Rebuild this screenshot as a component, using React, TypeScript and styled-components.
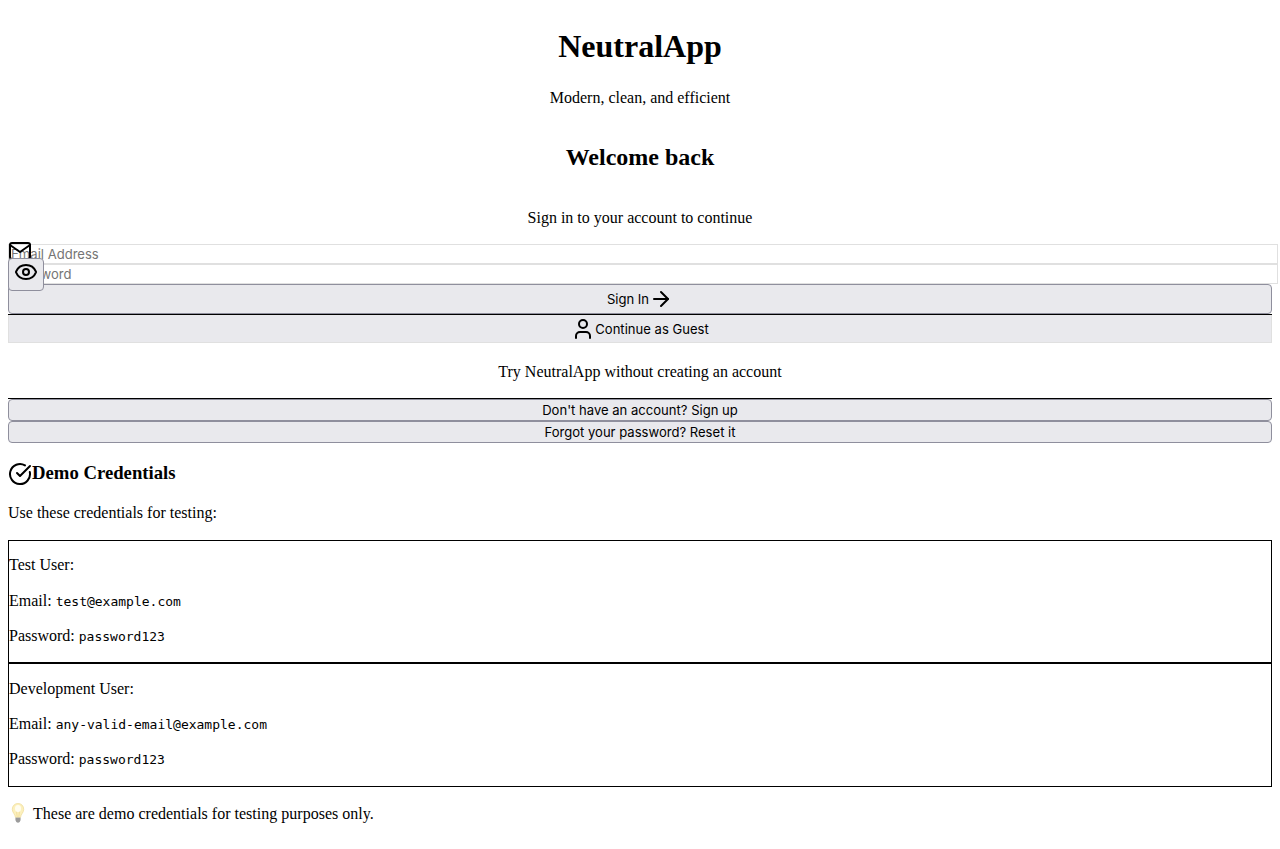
import React from "react";
import styled, { createGlobalStyle } from "styled-components";
import { ArrowRight, CircleCheckBig, Eye, User } from "lucide-react";

const GlobalStyle = createGlobalStyle`
  body {
    margin: 0;
    background: #fff;
    color: #000;
    font: 16px/18px "Liberation Serif", "Times New Roman", serif;
    overflow: hidden;
  }
  svg { flex: none; display: block; }
`;

const Page = styled.main`
  padding: 28px 8px 0;
  display: flex;
  flex-direction: column;
`;

const Header = styled.header`
  text-align: center;
`;

const Title = styled.h1`
  margin: 0 0 24px;
  font-size: 32px;
  line-height: 37px;
`;

const Subtitle = styled.h2`
  margin: 37px 0 38px;
  font-size: 24px;
  line-height: 27px;
`;

const Text = styled.p<{ $height?: number; $gap?: number }>`
  margin: 0 0 ${(p) => p.$gap ?? 0}px;
  line-height: ${(p) => p.$height ?? 18}px;
`;

const Form = styled.form`
  margin-top: 17px;
  display: flex;
  flex-direction: column;
`;

const Field = styled.div`
  position: relative;
  height: 20px;
`;

const Input = styled.input`
  display: block;
  box-sizing: border-box;
  width: calc(100% + 6px);
  height: 20px;
  margin: 0;
  padding: 1px 2px;
  border: 1px solid #e0e0e0;
  background: #fff;
  font: 13.07px Inter, sans-serif;
  &::placeholder { color: #757575; opacity: 1; }
`;

const FieldIcon = styled.span`
  position: absolute;
  left: 0;
  top: -5px;
`;

const Button = styled.button<{ $height: number }>`
  display: flex;
  align-items: center;
  justify-content: center;
  box-sizing: border-box;
  width: 100%;
  height: ${(p) => p.$height}px;
  margin: 0;
  padding: 0;
  border: 1px solid #8f8f9d;
  border-radius: 4px;
  background: #e9e9ed;
  color: #000;
  font: 13.07px Inter, sans-serif;
`;

const RevealButton = styled(Button)`
  position: absolute;
  left: 0;
  top: -6px;
  width: 36px;
  padding-bottom: 5px;
`;

const GuestButton = styled(Button)`
  border: 1px solid #e0e0e0;
  border-top: 0;
  border-radius: 0;
`;

const GuestHint = styled.p`
  margin: 0;
  padding-top: 2px;
  line-height: 53px;
`;

const Divided = styled.section`
  border-top: 1px solid #000;
  text-align: center;
`;

const DemoHeading = styled.h3`
  display: flex;
  align-items: center;
  margin: 19px 0 18px;
  font-size: 18.72px;
  line-height: 22px;
  height: 24px;
`;

const HeadingLabel = styled.span`
  padding-bottom: 2px;
`;

const Card = styled.div<{ $height: number }>`
  box-sizing: border-box;
  height: ${(p) => p.$height}px;
  border: 1px solid #000;
  padding-top: ${(p) => p.$height - 108}px;
`;

const Code = styled.code`
  font: 13px "DejaVu Sans Mono", monospace;
`;

const Note = styled.div`
  display: flex;
  align-items: center;
  gap: 5px;
  height: 20px;
  margin-top: 16px;
`;

const NoteLabel = styled.span`
  padding-top: 1px;
  letter-spacing: 0.01px;
`;

function Mail() {
  return (
    <svg width="24" height="24" viewBox="0 0 24 24" fill="none" stroke="currentColor" strokeWidth="2" strokeLinecap="round" strokeLinejoin="round">
      <path d="M4 4h16c1.1 0 2 .9 2 2v12c0 1.1-.9 2-2 2H4c-1.100 0-2-.9-2-2V6c0-1.100.9-2 2-2z" />
      <polyline points="22,6 12,13 2,6" />
    </svg>
  );
}

function Bulb() {
  return (
    <svg width="20" height="20" viewBox="0 0 20 20" fill="none">
      <path d="M10 .5C6.300 .5 4.300 3.200 4.300 6.300C4.300 9.700 7.100 11 7.500 14.500H12.500C12.900 11 15.700 9.700 15.700 6.300C15.700 3.200 13.700 .5 10 .5Z" fill="#fcf0bd" stroke="#f0dea0" strokeWidth=".8" />
      <path d="M8.500 8L9.200 14M11.500 8L10.800 14" stroke="#ecd48c" strokeWidth=".6" />
      <ellipse cx="10" cy="5.500" rx="3" ry="3.500" fill="#fffdf0" />
      <path d="M7.500 14.500H12.500V17.500L11 19.800H9L7.500 17.500Z" fill="#b0b0b0" />
      <path d="M7.500 16H12.500M8 18H12" stroke="#777" strokeWidth=".7" />
    </svg>
  );
}

function Credentials({ title, email, height }: { title: string; email: string; height: number }) {
  return (
    <Card $height={height}>
      <Text $gap={140 - height}>{title}</Text>
      <Text $height={19} $gap={16}>Email: <Code>{email}</Code></Text>
      <Text $height={19}>Password: <Code>password123</Code></Text>
    </Card>
  );
}

export default function App() {
  return (
    <>
      <GlobalStyle />
      <Page>
        <Header>
          <Title>NeutralApp</Title>
          <Text>Modern, clean, and efficient</Text>
          <Subtitle>Welcome back</Subtitle>
          <Text>Sign in to your account to continue</Text>
        </Header>
        <Form>
          <Field>
            <Input type="email" placeholder="Email Address" />
            <FieldIcon><Mail /></FieldIcon>
          </Field>
          <Field>
            <Input type="password" placeholder="Password" />
            <RevealButton type="button" $height={33} aria-label="Show password"><Eye size={24} /></RevealButton>
          </Field>
          <Button type="button" $height={30}>Sign In<ArrowRight size={24} /></Button>
        </Form>
        <Divided>
          <GuestButton type="button" $height={28}><User size={24} />Continue as Guest</GuestButton>
          <GuestHint>Try NeutralApp without creating an account</GuestHint>
        </Divided>
        <Divided>
          <Button type="button" $height={22}>Don't have an account? Sign up</Button>
          <Button type="button" $height={22}>Forgot your password? Reset it</Button>
        </Divided>
        <DemoHeading><CircleCheckBig size={24} /><HeadingLabel>Demo Credentials</HeadingLabel></DemoHeading>
        <Text $gap={18}>Use these credentials for testing:</Text>
        <Credentials title="Test User:" email="test@example.com" height={123} />
        <Credentials title="Development User:" email="any-valid-email@example.com" height={124} />
        <Note><Bulb /><NoteLabel>These are demo credentials for testing purposes only.</NoteLabel></Note>
      </Page>
    </>
  );
}
